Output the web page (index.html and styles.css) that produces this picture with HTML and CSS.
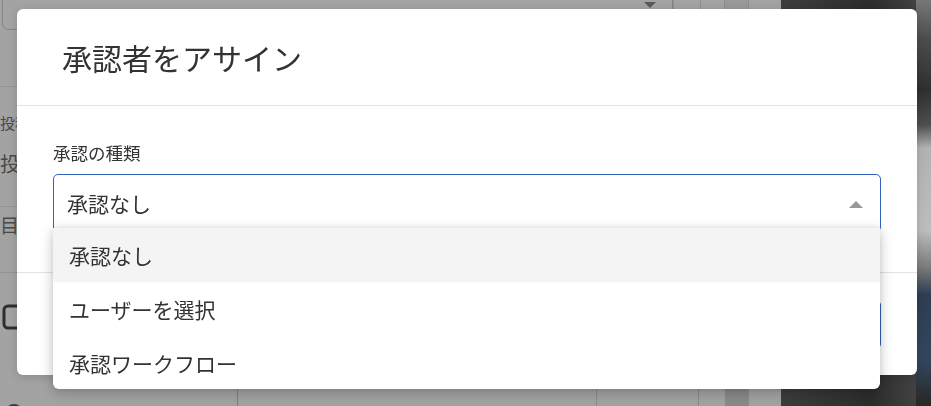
FILE: index.html
```html
<!DOCTYPE html>
<html lang="ja">
<head>
<meta charset="utf-8">
<title>承認者をアサイン</title>
<link rel="stylesheet" href="styles.css">
</head>
<body>
<div class="app">
  <div class="main">
    <div class="toolbar">
      <div class="search"><span class="caret-down"></span></div>
      <div class="tcell w27"></div>
      <div class="tcell w24"></div>
      <div class="tcell w24 light"></div>
      <div class="tcell grow"></div>
    </div>
    <div class="content">
      <div class="side">
        <div class="sec sec1"></div>
        <div class="sec sec2">
          <div class="small">投稿者</div>
          <div class="big">投稿日時</div>
        </div>
        <div class="sec sec3">
          <div class="mid">目次</div>
        </div>
        <div class="sec sec4">
          <svg class="chat" width="40" height="26" viewBox="0 0 40 26"><rect x="2" y="2" width="34" height="22" rx="4" fill="none" stroke="#2e2e2e" stroke-width="3"/></svg>
        </div>
        <div class="sec sec5">
          <span class="circle"></span><span class="foot-text">ラベル</span>
        </div>
      </div>
      <div class="col w359"></div>
      <div class="col w102"></div>
      <div class="col w27"></div>
      <div class="col w22 dark"></div>
      <div class="col grow"></div>
    </div>
  </div>
  <div class="photo"></div>
</div>

<div class="modal">
  <div class="modal-header">
    <h2 class="modal-title">承認者をアサイン</h2>
  </div>
  <div class="modal-body">
    <div class="field-label">承認の種類</div>
    <div class="select">
      <span class="select-value">承認なし</span>
      <span class="caret-up"></span>
      <ul class="menu">
        <li class="menu-item active">承認なし</li>
        <li class="menu-item">ユーザーを選択</li>
        <li class="menu-item">承認ワークフロー</li>
      </ul>
    </div>
  </div>
  <div class="modal-footer">
    <button class="btn btn-cancel">キャンセル</button>
    <button class="btn btn-primary">アサイン</button>
  </div>
</div>
</body>
</html>
```
FILE: styles.css
```css
* { box-sizing: border-box; }
html, body { margin: 0; padding: 0; }
body {
  width: 931px;
  height: 406px;
  overflow: hidden;
  background: #a2a2a2;
  font-family: "Noto Sans CJK JP", "Noto Sans", sans-serif;
  color: #333;
}

/* ---------- dimmed page behind ---------- */
.app {
  display: flex;
  height: 406px;
}
.main {
  width: 781px;
  display: flex;
  flex-direction: column;
  background: #a3a3a3;
}
.toolbar {
  display: flex;
  height: 50px;
  margin-top: -20px;
  flex-shrink: 0;
}
.search {
  width: 671px;
  margin-left: 2px;
  border: 1px solid #858585;
  border-radius: 0 0 4px 6px;
  position: relative;
  display: flex;
  justify-content: flex-end;
  align-items: center;
  padding-right: 16px;
  padding-top: 10px;
  align-items: flex-start;
}
.caret-down {
  margin-top: 11px;
  width: 0;
  height: 0;
  border-left: 6px solid transparent;
  border-right: 6px solid transparent;
  border-top: 6px solid #5a5a5a;
}
.tcell { border-left: 1px solid #8e8e8e; }
.tcell.w27 { width: 27px; }
.tcell.w24 { width: 24px; }
.tcell.light { background: #999; }
.tcell.grow { flex: 1; }

.content {
  flex: 1;
  display: flex;
}
.side {
  width: 238px;
  border-right: 1px solid #7e7e7e;
  display: flex;
  flex-direction: column;
  color: #4a4a4a;
}
.sec { border-bottom: 1px solid #939393; }
.sec1 { height: 57px; }
.sec2 { height: 120px; padding-top: 25px; }
.small { font-size: 15px; line-height: 22px; }
.big { font-size: 20px; line-height: 28px; margin-top: 16px; }
.sec3 { height: 66px; padding-top: 4px; }
.mid { font-size: 19px; line-height: 28px; }
.sec4 { height: 128px; padding-top: 31px; padding-left: 2px; border-bottom: none; }
.chat { display: block; }
.sec5 { display: flex; align-items: center; gap: 12px; padding-left: 5px; }
.circle {
  width: 18px; height: 18px;
  border-radius: 50%;
  border: 3px solid #2d3b52;
  background: #6f8fb8;
}
.foot-text { font-size: 16px; color: #444; }

.col { border-right: 1px solid #8a8a8a; }
.col.w359 { width: 359px; }
.col.w102 { width: 102px; }
.col.w27 { width: 27px; }
.col.w22 { width: 22px; }
.col.dark { background: #8a8a8a; }
.col.grow { flex: 1; border-right: none; border-left: 1px solid #8a8a8a; }

.photo {
  flex: 1;
  background:
    linear-gradient(to bottom, #777 0, #4c4c4c 40px, #2f2f2f 90px, #4f4f4f 125px, #b2b2b2 148px, #bdbdbd 230px, #7a7a7a 268px, #2e3d52 295px, #33465f 360px, #2a2a2a 400px) right top / 15px 100% no-repeat,
    linear-gradient(to right, #3d3d3d, #2b2d2b 60%, #484848),
    #2c2e2c;
}

/* ---------- modal ---------- */
.modal {
  position: fixed;
  left: 17px;
  top: 9px;
  width: 900px;
  height: 366px;
  background: #fff;
  border-radius: 6px;
  box-shadow: 0 2px 10px rgba(0,0,0,0.15);
  display: flex;
  flex-direction: column;
}
.modal-header {
  height: 97px;
  border-bottom: 1px solid #e2e2e2;
  display: flex;
  align-items: center;
  padding-left: 45px;
  flex-shrink: 0;
}
.modal-title {
  margin: 0;
  font-size: 30px;
  font-weight: 400;
  line-height: 40px;
  color: #333;
}
.modal-body {
  padding: 35px 36px 40px;
  border-bottom: 1px solid #e2e2e2;
  flex-shrink: 0;
}
.field-label {
  font-size: 17.5px;
  line-height: 24px;
  color: #333;
}
.select {
  position: relative;
  margin-top: 9px;
  height: 58px;
  border: 1px solid #2f62bd;
  border-radius: 5px;
  display: flex;
  align-items: center;
  justify-content: space-between;
  padding: 0 17px 0 13px;
}
.select-value {
  font-size: 21px;
  line-height: 30px;
  color: #333;
}
.caret-up {
  width: 0;
  height: 0;
  margin-top: 3px;
  border-left: 7px solid transparent;
  border-right: 7px solid transparent;
  border-bottom: 7px solid #999;
}
.menu {
  position: absolute;
  top: 53px;
  left: -1px;
  width: 827px;
  margin: 0;
  padding: 0;
  list-style: none;
  background: #fff;
  border-radius: 0 0 6px 6px;
  box-shadow: 0 4px 14px rgba(0,0,0,0.22), 0 0 6px rgba(0,0,0,0.08);
  z-index: 5;
  overflow: hidden;
}
.menu-item {
  height: 54px;
  display: flex;
  align-items: center;
  padding-left: 16px;
  font-size: 21px;
  color: #333;
}
.menu-item:last-child { height: 53px; }
.menu-item.active { background: #f4f4f4; }

.modal-footer {
  flex: 1;
  display: flex;
  justify-content: flex-end;
  align-items: center;
  gap: 12px;
  padding-right: 36px;
}
.btn {
  height: 47px;
  border-radius: 4px;
  font-family: inherit;
  font-size: 18px;
  padding: 0 28px;
}
.btn-cancel {
  background: #fff;
  border: 1px solid #ccc;
  color: #333;
}
.btn-primary {
  background: #2f62bd;
  border: 1px solid #2f62bd;
  color: #fff;
}
```
